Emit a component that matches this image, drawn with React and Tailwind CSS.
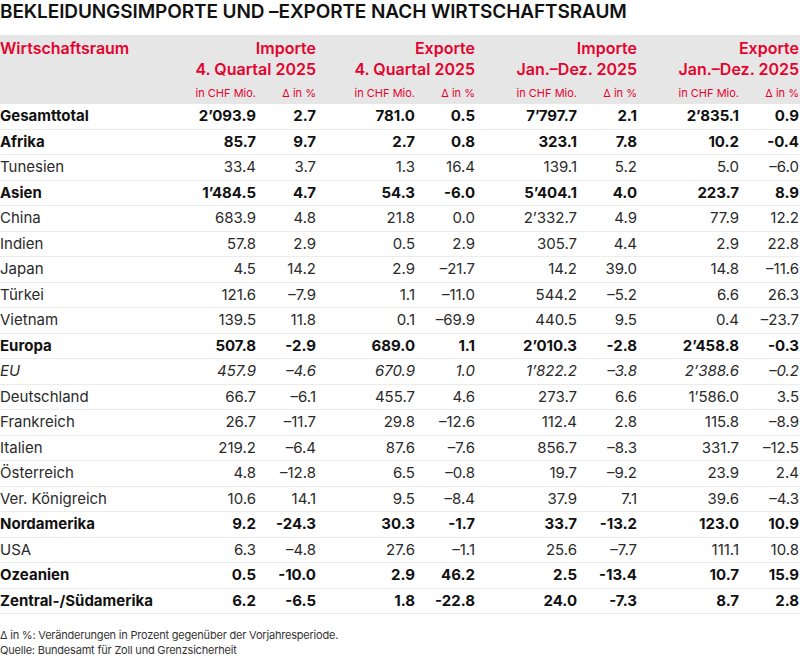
import React from "react";

const cols = "grid grid-cols-[156px_100px_60px_99px_60px_102px_60px_102px_60px]";

const groups = [
  ["Importe", "4. Quartal 2025"],
  ["Exporte", "4. Quartal 2025"],
  ["Importe", "Jan.–Dez. 2025"],
  ["Exporte", "Jan.–Dez. 2025"],
];

// kind: b = bold total row, i = italic, n = normal
const rows = [
  ["Gesamttotal", "b", ["2’093.9", "2.7", "781.0", "0.5", "7’797.7", "2.1", "2’835.1", "0.9"]],
  ["Afrika", "b", ["85.7", "9.7", "2.7", "0.8", "323.1", "7.8", "10.2", "-0.4"]],
  ["Tunesien", "n", ["33.4", "3.7", "1.3", "16.4", "139.1", "5.2", "5.0", "–6.0"]],
  ["Asien", "b", ["1’484.5", "4.7", "54.3", "-6.0", "5’404.1", "4.0", "223.7", "8.9"]],
  ["China", "n", ["683.9", "4.8", "21.8", "0.0", "2’332.7", "4.9", "77.9", "12.2"]],
  ["Indien", "n", ["57.8", "2.9", "0.5", "2.9", "305.7", "4.4", "2.9", "22.8"]],
  ["Japan", "n", ["4.5", "14.2", "2.9", "–21.7", "14.2", "39.0", "14.8", "–11.6"]],
  ["Türkei", "n", ["121.6", "–7.9", "1.1", "–11.0", "544.2", "–5.2", "6.6", "26.3"]],
  ["Vietnam", "n", ["139.5", "11.8", "0.1", "–69.9", "440.5", "9.5", "0.4", "–23.7"]],
  ["Europa", "b", ["507.8", "-2.9", "689.0", "1.1", "2’010.3", "-2.8", "2’458.8", "-0.3"]],
  ["EU", "i", ["457.9", "–4.6", "670.9", "1.0", "1’822.2", "–3.8", "2’388.6", "–0.2"]],
  ["Deutschland", "n", ["66.7", "–6.1", "455.7", "4.6", "273.7", "6.6", "1’586.0", "3.5"]],
  ["Frankreich", "n", ["26.7", "–11.7", "29.8", "–12.6", "112.4", "2.8", "115.8", "–8.9"]],
  ["Italien", "n", ["219.2", "–6.4", "87.6", "–7.6", "856.7", "–8.3", "331.7", "–12.5"]],
  ["Österreich", "n", ["4.8", "–12.8", "6.5", "–0.8", "19.7", "–9.2", "23.9", "2.4"]],
  ["Ver. Königreich", "n", ["10.6", "14.1", "9.5", "–8.4", "37.9", "7.1", "39.6", "–4.3"]],
  ["Nordamerika", "b", ["9.2", "-24.3", "30.3", "-1.7", "33.7", "-13.2", "123.0", "10.9"]],
  ["USA", "n", ["6.3", "–4.8", "27.6", "–1.1", "25.6", "–7.7", "111.1", "10.8"]],
  ["Ozeanien", "b", ["0.5", "-10.0", "2.9", "46.2", "2.5", "-13.4", "10.7", "15.9"]],
  ["Zentral-/Südamerika", "b", ["6.2", "-6.5", "1.8", "-22.8", "24.0", "-7.3", "8.7", "2.8"]],
];

export default function App() {
  return (
    <div className="w-[800px] h-[656px] bg-white overflow-hidden font-['Inter',sans-serif]">
      <h1 className="text-[19px] leading-[24px] font-semibold text-[#111] tracking-[-0.1px]">
        BEKLEIDUNGSIMPORTE UND –EXPORTE NACH WIRTSCHAFTSRAUM
      </h1>

      <div className="mt-[11px] bg-[#e6e6e6] pt-[3px] pb-[4px] text-[#e4032e]">
        <div className={cols}>
          <div className="text-[16px] leading-[21px] font-semibold">Wirtschaftsraum</div>
          {groups.map(([a, b], i) => (
            <div key={i} className="col-span-2 text-right text-[16px] leading-[21px] font-semibold">
              <div>{a}</div>
              <div>{b}</div>
            </div>
          ))}
        </div>
        <div className={`${cols} mt-[6px] text-[11px] leading-[14px]`}>
          <div />
          {groups.map((g, i) => (
            <React.Fragment key={i}>
              <div className="text-right">in CHF Mio.</div>
              <div className="text-right">Δ in %</div>
            </React.Fragment>
          ))}
        </div>
      </div>

      <div>
        {rows.map(([label, kind, vals]) => {
          const style =
            kind === "b"
              ? "font-bold text-[#111]"
              : kind === "i"
              ? "italic text-[#2a2a2a]"
              : "text-[#2a2a2a]";
          return (
            <div
              key={label}
              className={`${cols} ${style} h-[25.5px] items-center border-b border-[#ececec] text-[15px] leading-[18px]`}
            >
              <div>{label}</div>
              {vals.map((v, i) => (
                <div key={i} className="text-right">
                  {v}
                </div>
              ))}
            </div>
          );
        })}
      </div>

      <div className="mt-[14px] text-[11px] leading-[15px] text-[#333] tracking-[-0.2px]">
        <div>Δ in %: Veränderungen in Prozent gegenüber der Vorjahresperiode.</div>
        <div>Quelle: Bundesamt für Zoll und Grenzsicherheit</div>
      </div>
    </div>
  );
}
